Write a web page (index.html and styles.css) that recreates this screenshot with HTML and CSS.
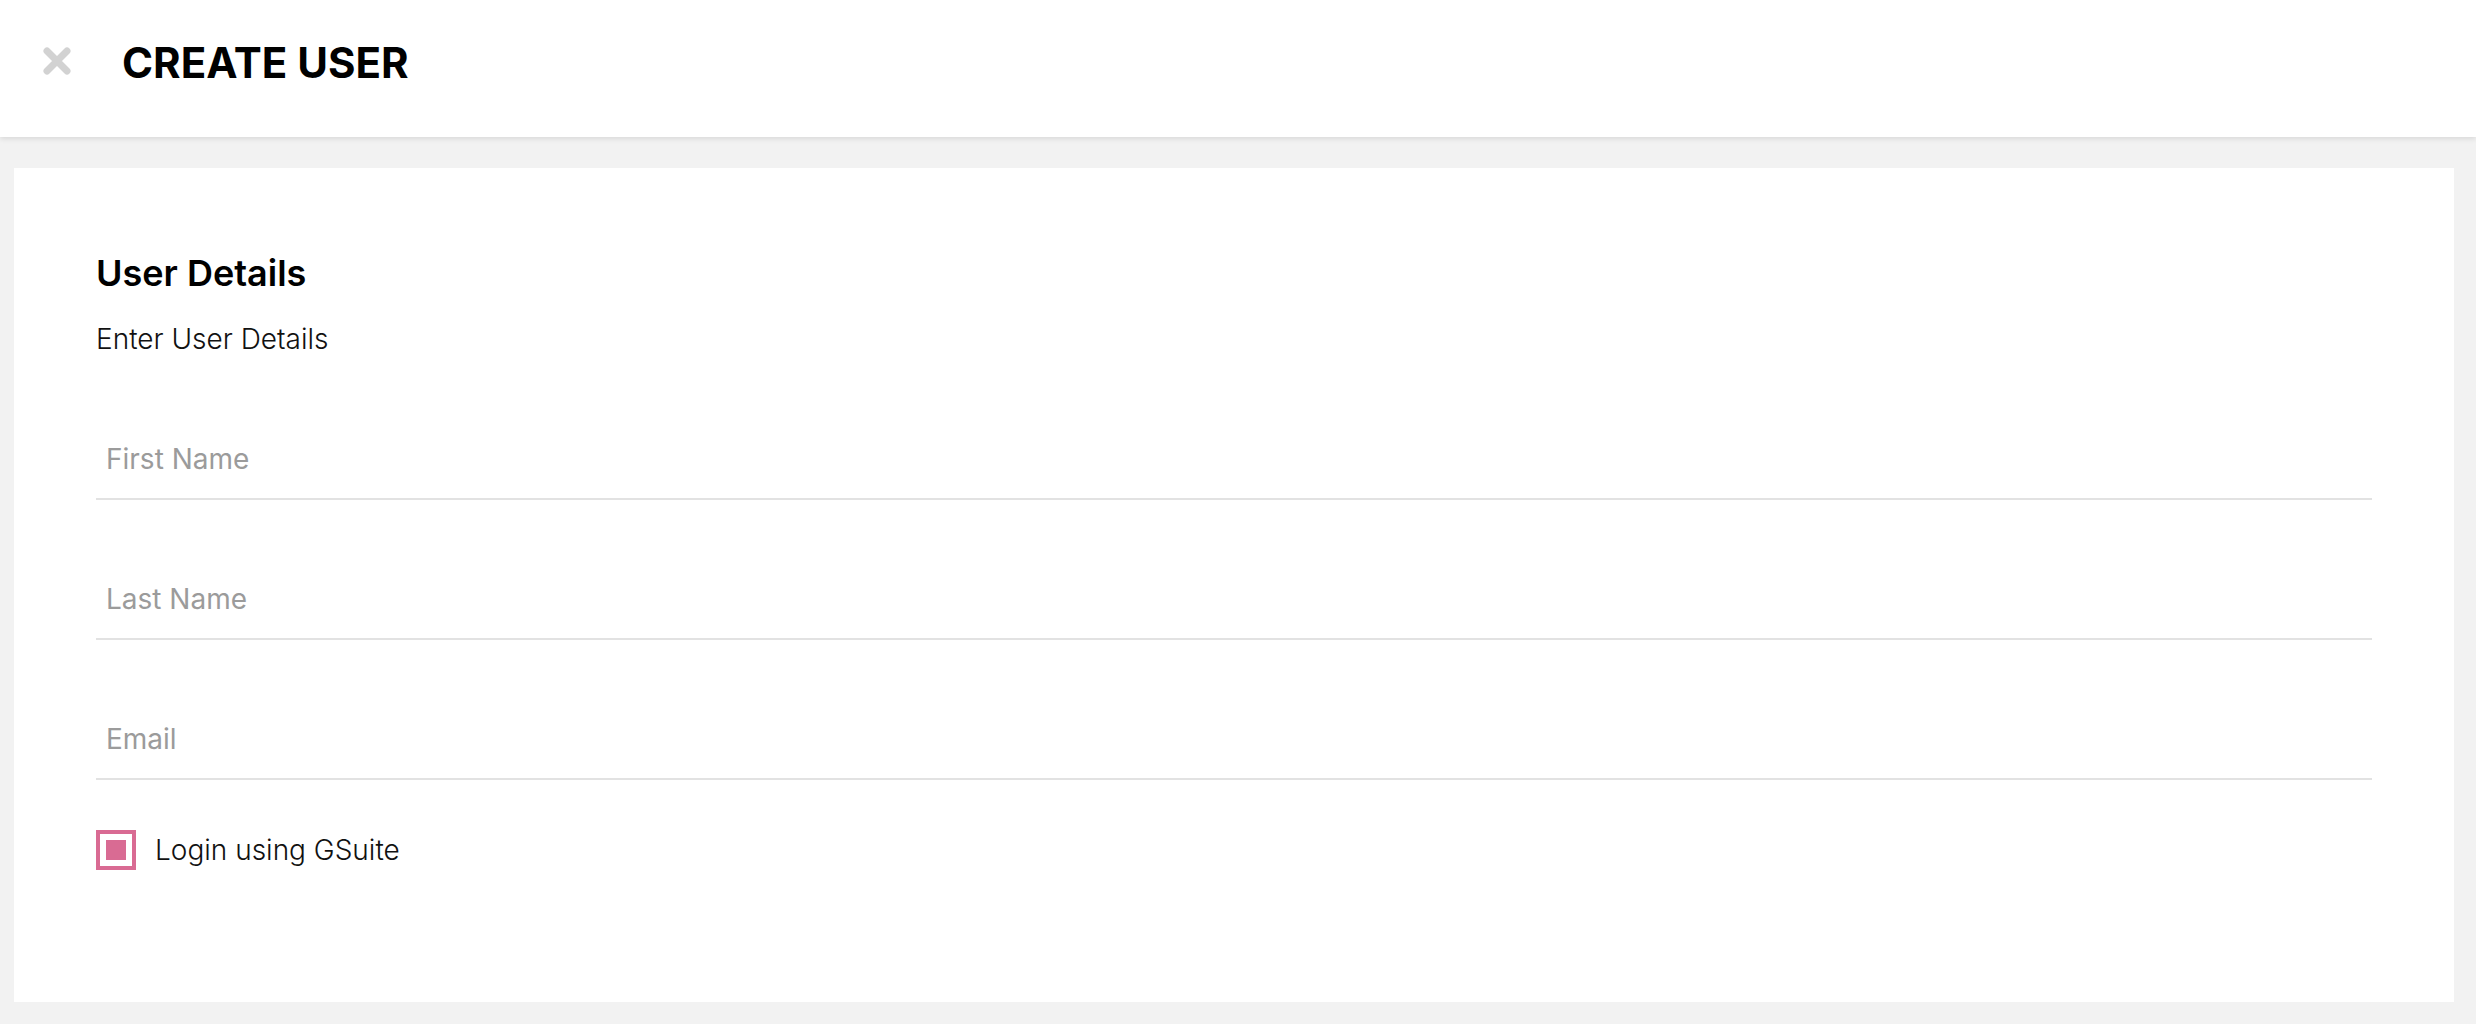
FILE: index.html
```html
<!DOCTYPE html>
<html lang="en">
<head>
<meta charset="utf-8">
<title>Create User</title>
<link rel="stylesheet" href="styles.css">
</head>
<body>
<header class="topbar">
  <button class="close-btn" aria-label="Close">
    <svg viewBox="0 0 30 30" width="30" height="30"><path d="M5 5 L25 25 M25 5 L5 25" stroke="#d2d2d2" stroke-width="7" stroke-linecap="round" fill="none"/></svg>
  </button>
  <h1 class="title">CREATE USER</h1>
</header>
<main class="page">
  <section class="card">
    <h2 class="card-title">User Details</h2>
    <p class="card-sub">Enter User Details</p>
    <div class="field"><input class="input" type="text" placeholder="First Name"></div>
    <div class="field"><input class="input" type="text" placeholder="Last Name"></div>
    <div class="field"><input class="input" type="email" placeholder="Email"></div>
    <label class="check">
      <span class="check-box"><span class="check-fill"></span></span>
      <span class="check-label">Login using GSuite</span>
    </label>
  </section>
</main>
</body>
</html>
```

FILE: styles.css
```css
* { box-sizing: border-box; }
html, body { margin: 0; padding: 0; }
body {
  background: #f2f2f2;
  font-family: Inter, "Noto Sans", sans-serif;
  color: #000;
  height: 1024px;
  overflow: hidden;
}
.topbar {
  position: relative;
  z-index: 1;
  height: 137px;
  background: #fff;
  display: flex;
  align-items: center;
  padding: 0 0 10px 42px;
  box-shadow: 0 2px 5px rgba(0,0,0,0.10);
}
.close-btn {
  border: 0;
  background: none;
  padding: 0;
  width: 30px;
  height: 30px;
  margin-top: -5px;
  display: flex;
}
.title {
  margin: 0 0 0 50px;
  font-size: 42px;
  font-weight: 700;
  letter-spacing: 0;
  line-height: 1.21;
}
.page {
  padding: 31px 22px 22px 14px;
}
.card {
  background: #fff;
  height: 834px;
  padding: 84px 82px 0 82px;
}
.card-title {
  margin: 0;
  font-size: 36px;
  line-height: 42px;
  font-weight: 600;
}
.card-sub {
  margin: 30px 0 0 0;
  font-size: 28px;
  line-height: 30px;
  font-weight: 300;
  color: #111;
}
.field {
  margin-top: 82px;
  border-bottom: 2px solid #e2e2e2;
}
.card-sub + .field { margin-top: 88px; }
.input {
  display: block;
  width: 100%;
  border: 0;
  outline: none;
  background: transparent;
  font-family: inherit;
  font-size: 28px;
  line-height: 34px;
  height: 56px;
  padding: 0 0 22px 10px;
  color: #111;
}
.input::placeholder { color: #9b9b9b; }
.check {
  margin-top: 50px;
  display: flex;
  align-items: center;
  gap: 19px;
}
.check-box {
  width: 40px;
  height: 40px;
  border: 4px solid #d96b93;
  padding: 6px;
  display: block;
}
.check-fill {
  display: block;
  width: 20px;
  height: 20px;
  background: #d96b93;
}
.check-label {
  font-size: 28px;
  font-weight: 300;
  color: #111;
}
```
